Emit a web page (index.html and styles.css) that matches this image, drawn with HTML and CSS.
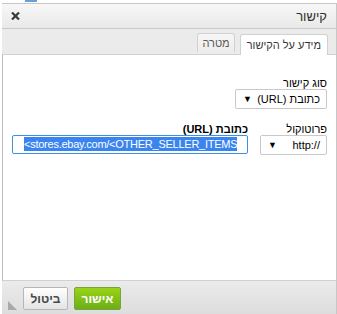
FILE: index.html
```html
<!DOCTYPE html>
<html lang="he" dir="rtl">
<head>
  <meta charset="UTF-8">
  <title>קישור</title>
  <link rel="stylesheet" href="styles.css">
</head>
<body>
  <div class="backdrop-mark"></div>
  <div class="dialog">
    <div class="dialog-title">
      <span>קישור</span>
      <svg class="close" width="9" height="8" viewBox="0 0 9 8">
        <path d="M1 0.5 L8 7.5 M8 0.5 L1 7.5" stroke="#3a3a3a" stroke-width="2.2"/>
      </svg>
    </div>
    <div class="tabs">
      <div class="tab active">מידע על הקישור</div>
      <div class="tab">מטרה</div>
    </div>
    <div class="contents">
      <div class="field">
        <label>סוג קישור</label>
        <div class="select type-select">
          <span>כתובת (URL)</span>
          <span class="arrow">&#9660;</span>
        </div>
      </div>
      <div class="row">
        <div class="field">
          <label>פרוטוקול</label>
          <div class="select proto-select">
            <span dir="ltr">http://</span>
            <span class="arrow">&#9660;</span>
          </div>
        </div>
        <div class="field url-field">
          <label class="bold">כתובת (URL)</label>
          <div class="text-input" dir="ltr"><span class="selected">&lt;stores.ebay.com/&lt;OTHER_SELLER_ITEMS</span></div>
        </div>
      </div>
    </div>
    <div class="footer">
      <span class="grip"></span>
      <button class="btn ok">אישור</button>
      <button class="btn">ביטול</button>
    </div>
  </div>
</body>
</html>
```

FILE: styles.css
```css
* {
  box-sizing: border-box;
}
body {
  margin: 0;
  background: #fff;
  font-family: "Liberation Sans", Arial, sans-serif;
  font-size: 12px;
  color: #000;
  overflow: hidden;
}
.backdrop-mark {
  position: absolute;
  top: 0;
  left: 25px;
  width: 12px;
  height: 2px;
  background: #6b9fd4;
}
.dialog {
  width: 335px;
  height: 311px;
  margin-top: 3px;
  border-top: 1px solid #c7c7c7;
  border-right: 1px solid #c7c7c7;
  display: flex;
  flex-direction: column;
  background: #e8e8e8;
}
.dialog-title {
  height: 25px;
  padding: 0 9px 0 9px;
  display: flex;
  align-items: center;
  justify-content: space-between;
  font-size: 13px;
  color: #2f2f2f;
  background: linear-gradient(#f7f7f7, #e9e9e9);
  border-bottom: 1px solid #c9c9c9;
}
.close {
  display: block;
}
.tabs {
  height: 25px;
  display: flex;
  align-items: flex-end;
  gap: 5px;
  padding-right: 8px;
  background: #ebebeb;
  font-size: 11px;
}
.tab {
  height: 19px;
  line-height: 18px;
  padding: 0 4px;
  border: 1px solid #d1d1d1;
  border-bottom: none;
  border-radius: 3px 3px 0 0;
  background: linear-gradient(#f7f7f7, #ececec);
  color: #595959;
  margin-bottom: 2px;
}
.tab.active {
  height: 21px;
  line-height: 20px;
  margin-bottom: -1px;
  padding: 0 6px;
  background: #fff;
  color: #383838;
  position: relative;
  z-index: 1;
}
.contents {
  flex: 1;
  background: #fff;
  border-top: 1px solid #d1d1d1;
  border-bottom: 1px solid #d1d1d1;
  border-left: 1px solid #bdbdbd;
  padding: 22px 9px 0 8px;
}
.field label {
  display: block;
  line-height: 12px;
  font-size: 11px;
}
.field label.bold {
  font-weight: bold;
}
.select {
  height: 20px;
  border: 1px solid #c9c9c9;
  border-radius: 2px;
  display: flex;
  align-items: center;
  justify-content: space-between;
  padding: 0 6px 0 7px;
  background: #fff;
  white-space: nowrap;
  font-size: 11px;
}
.arrow {
  font-size: 9px;
}
.type-select {
  width: 92px;
}
.proto-select {
  width: 67px;
}
.row {
  display: flex;
  gap: 12px;
  margin-top: 14px;
}
.text-input {
  width: 236px;
  height: 19px;
  line-height: 17px;
  border: 1px solid #3c8ee6;
  border-radius: 2px;
  padding-left: 11px;
  overflow: hidden;
  white-space: nowrap;
  text-align: left;
}
.selected {
  background: #3a84f0;
  color: #fff;
  font-size: 11px;
  letter-spacing: -0.25px;
  padding: 1px 0;
}
.footer {
  height: 33px;
  display: flex;
  align-items: flex-start;
  padding-top: 6px;
  justify-content: flex-end;
  gap: 6px;
  padding-left: 21px;
  background: linear-gradient(#ebebeb, #dddddd);
  position: relative;
}
.grip {
  position: absolute;
  left: 6px;
  bottom: 4px;
  width: 0;
  height: 0;
  border-right: 9px solid transparent;
  border-bottom: 9px solid #a9a9a9;
}
.btn {
  height: 23px;
  width: 45px;
  padding: 0;
  font-family: "Liberation Sans", Arial, sans-serif;
  font-size: 12px;
  font-weight: bold;
  color: #474747;
  border: 1px solid #b6b6b6;
  border-radius: 2px;
  background: linear-gradient(#fff, #e4e4e4);
}
.btn.ok {
  width: 47px;
  color: #fff;
  border-color: #73a73a;
  background: linear-gradient(#9ad318, #6cae18);
}
```
